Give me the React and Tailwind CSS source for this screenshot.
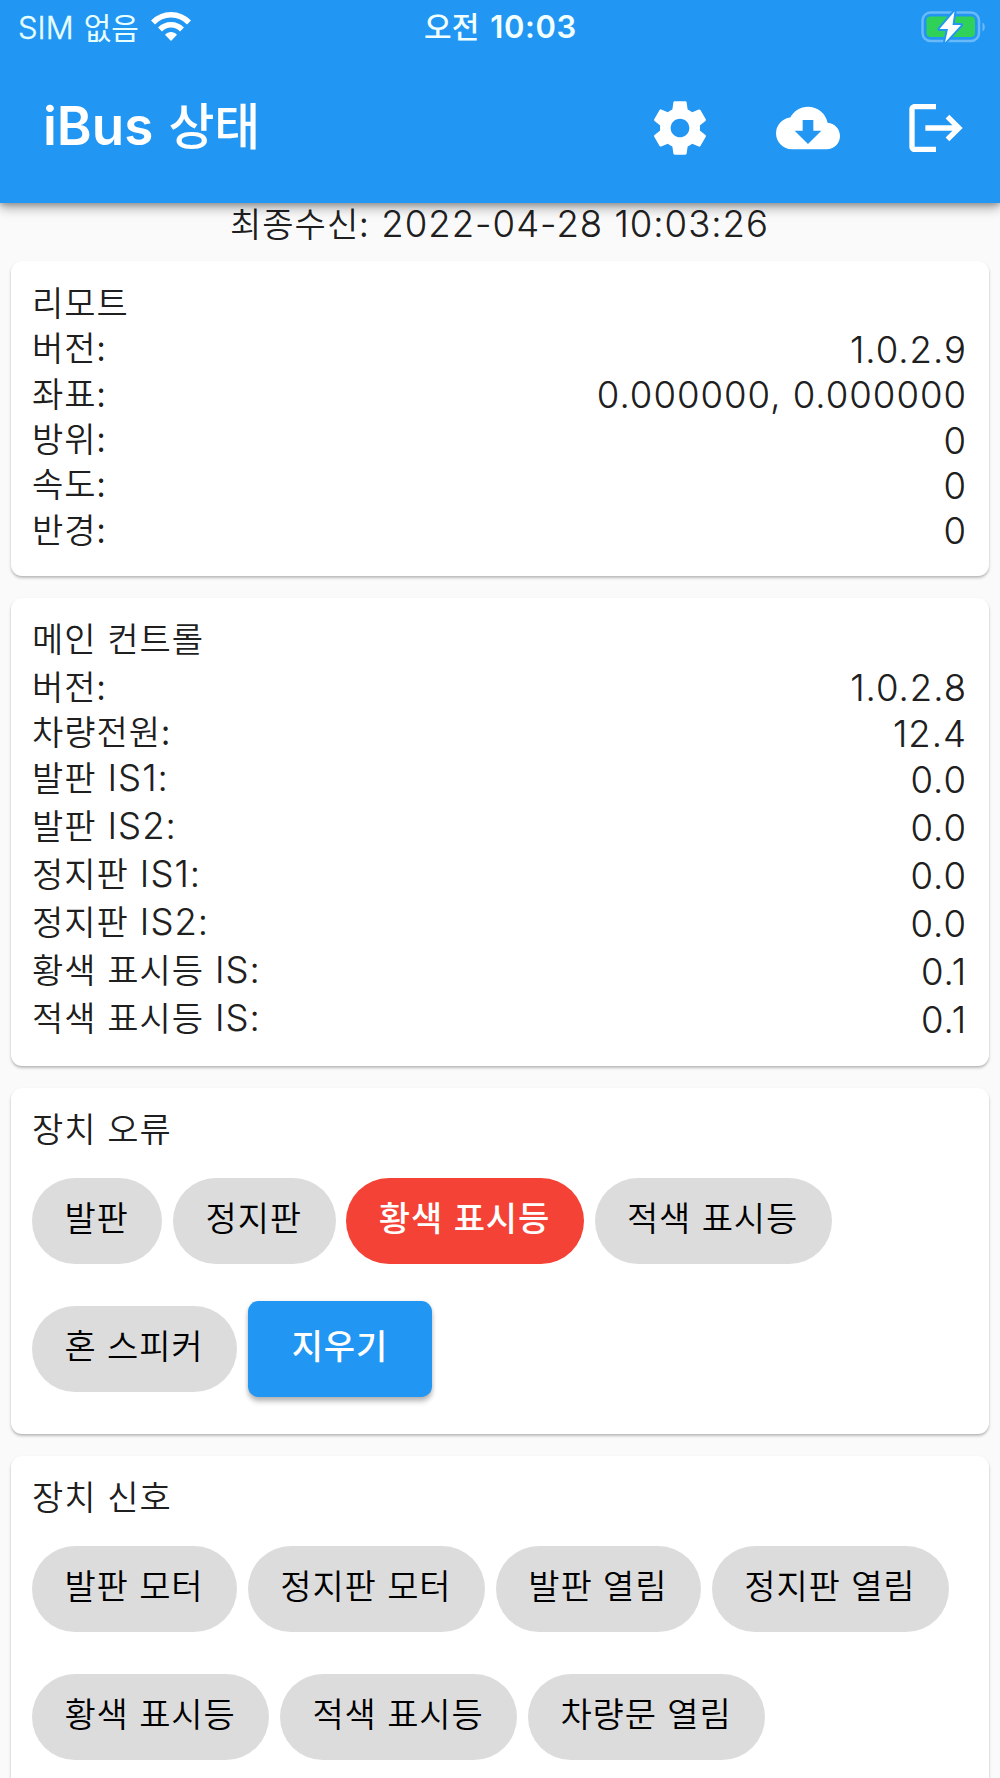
import React from "react";
import { MdCloudDownload } from "react-icons/md";

const remote = [
  { label: "버전:", value: "1.0.2.9" },
  { label: "좌표:", value: "0.000000, 0.000000" },
  { label: "방위:", value: "0" },
  { label: "속도:", value: "0" },
  { label: "반경:", value: "0" },
];

const mainControl = [
  { label: "버전:", value: "1.0.2.8" },
  { label: "차량전원:", value: "12.4" },
  { label: "발판", suffix: "IS1:", value: "0.0" },
  { label: "발판", suffix: "IS2:", value: "0.0" },
  { label: "정지판", suffix: "IS1:", value: "0.0" },
  { label: "정지판", suffix: "IS2:", value: "0.0" },
  { label: "황색 표시등", suffix: "IS:", value: "0.1" },
  { label: "적색 표시등", suffix: "IS:", value: "0.1" },
];

const errors = [
  { label: "발판" },
  { label: "정지판" },
  { label: "황색 표시등", active: true },
  { label: "적색 표시등" },
  { label: "혼 스피커" },
];

const signals = [
  { label: "발판 모터" },
  { label: "정지판 모터" },
  { label: "발판 열림" },
  { label: "정지판 열림" },
  { label: "황색 표시등" },
  { label: "적색 표시등" },
  { label: "차량문 열림" },
];

const Korean = ({ children }) => (
  <span className="font-['Noto_Sans_CJK_KR',sans-serif] text-[34px] font-[350] tracking-[1px] [word-spacing:2px]">
    {children}
  </span>
);

const Latin = ({ children }) => (
  <span className="font-['Inter',sans-serif] text-[36.5px] font-light tracking-[1px] [-webkit-text-stroke:0.2px_currentColor]">
    {children}
  </span>
);

const Card = ({ className = "", children }) => (
  <section
    className={`rounded-[11px] bg-white px-[21.33px] shadow-[0_2px_3px_rgba(0,0,0,0.24),0_1px_2px_rgba(0,0,0,0.05)] ${className}`}
  >
    {children}
  </section>
);

const Row = ({ label, suffix, value }) => (
  <div className={`flex items-center justify-between ${suffix ? "h-12" : "h-[45.33px]"}`}>
    <div
      className={`flex items-baseline gap-[11px] leading-none ${suffix ? "" : "pb-[2px]"}`}
    >
      <Korean>{label}</Korean>
      {suffix && <Latin>{suffix}</Latin>}
    </div>
    <div className="flex pt-1 pr-px leading-none">
      <Latin>{value}</Latin>
    </div>
  </div>
);

const Chip = ({ label, active }) => (
  <div className="flex h-32 items-center">
    <div
      className={`flex h-[85.33px] items-center rounded-full pr-[33.8px] pl-[32.4px] pb-[8px] leading-none font-['Noto_Sans_CJK_KR',sans-serif] text-[34px] tracking-[0.87px] [word-spacing:2px] whitespace-nowrap ${
        active ? "bg-[#f44336] font-medium text-white" : "bg-[#dcdcdc] font-[350] text-black"
      }`}
    >
      {label}
    </div>
  </div>
);

const StatusBar = () => (
  <div className="grid h-[53.33px] grid-cols-3 items-center pr-[14px] pl-[18px] leading-none">
    <div className="flex items-center gap-[12px] text-[#e6ffff]">
      <div className="flex items-baseline gap-[10px]">
        <span className="font-['Inter',sans-serif] text-[31px] font-light [-webkit-text-stroke:0.4px_currentColor]">
          SIM
        </span>
        <span className="font-['Noto_Sans_CJK_KR',sans-serif] text-[30px] font-normal">없음</span>
      </div>
      <svg className="h-[29px] w-[40px]" viewBox="0 0 40 29" fill="none" stroke="white">
        <path d="M2 10.5C12 .2 28 .2 38 10.5" strokeWidth="5.5" />
        <path d="M9 17.5C15.200 11.200 24.800 11.200 31 17.500" strokeWidth="5.5" />
        <path d="M20 29l-6-6.200c3.300-3.600 8.700-3.600 12 0z" fill="white" stroke="none" />
      </svg>
    </div>
    <div className="flex items-baseline justify-center gap-[11px] pr-[3px] pb-px text-[#f2ffff]">
      <span className="font-['Noto_Sans_CJK_KR',sans-serif] text-[30px] font-medium">오전</span>
      <span className="font-['Inter',sans-serif] text-[31px] font-semibold tracking-[0.6px]">
        10:03
      </span>
    </div>
    <svg className="h-[34px] w-[66px] justify-self-end" viewBox="0 0 66 34">
      <rect x="2.500" y="2.500" width="56.500" height="28.500" rx="8" fill="none" stroke="#6ab9f8" strokeWidth="2.500" />
      <path d="M62.500 12.500c3 1.500 3 7.500 0 9z" fill="#6ab9f8" />
      <rect x="6.500" y="6.500" width="48.500" height="20.500" rx="4" fill="#30d158" />
      <path
        d="M34.500 1.500L19.500 19h8.500L25 32.500 41 15h-8.500z"
        fill="white"
        stroke="#2196f3"
        strokeWidth="4"
        strokeLinejoin="round"
        paintOrder="stroke"
      />
    </svg>
  </div>
);

const App = () => {
  return (
    <div className="flex h-[1778px] w-[1000px] flex-col overflow-hidden bg-[#fafafa] text-black/90">
      <header className="h-[202.67px] shrink-0 bg-[#2196f3] text-white shadow-[0_5px_11px_rgba(0,0,0,0.32),0_2px_5px_rgba(0,0,0,0.2)]">
        <StatusBar />
        <div className="flex h-[149.33px] items-center justify-between pr-8 pl-[43px]">
          <h1 className="flex items-baseline gap-[15px] pb-[4px] leading-none">
            <span className="font-['Inter',sans-serif] text-[53px] font-semibold">iBus</span>
            <span className="font-['Noto_Sans_CJK_KR',sans-serif] text-[50px] font-medium">상태</span>
          </h1>
          <div className="flex items-center gap-16">
            <svg className="size-16" viewBox="0 0 24 24" fill="currentColor">
              <path d="M19.430 12.980c.040-.320.070-.640.070-.980s-.030-.660-.070-.980l2.110-1.650c.190-.150.240-.420.120-.640l-2-3.460c-.120-.220-.390-.300-.610-.220l-2.490 1c-.520-.400-1.080-.730-1.690-.980l-.380-2.650C14.460 2.180 14.250 2 14 2h-4c-.250 0-.460.180-.490.420l-.380 2.650c-.610.250-1.170.590-1.690.980l-2.490-1c-.230-.090-.490 0-.610.220l-2 3.460c-.130.220-.070.490.120.640l2.110 1.650c-.040.320-.070.650-.070.980s.030.660.070.980l-2.110 1.650c-.190.150-.240.420-.120.640l2 3.460c.120.220.390.300.610.220l2.490-1c.520.400 1.080.730 1.690.980l.380 2.650c.030.240.240.420.490.420h4c.250 0 .460-.180.490-.420l.380-2.650c.610-.250 1.170-.590 1.690-.980l2.490 1c.230.090.490 0 .610-.220l2-3.460c.120-.220.070-.490-.120-.640l-2.110-1.650zM12 15.500c-1.930 0-3.500-1.570-3.500-3.500s1.570-3.500 3.500-3.500 3.500 1.570 3.500 3.500-1.570 3.500-3.500 3.500z" />
            </svg>
            <MdCloudDownload className="size-16" />
            <svg className="size-16" viewBox="0 0 24 24" fill="currentColor">
              <path d="M17 7l-1.410 1.410L18.170 11H8v2h10.170l-2.580 2.580L17 17l5-5zM4 5h8V3H4c-1.100 0-2 .900-2 2v14c0 1.100.900 2 2 2h8v-2H4V5z" />
            </svg>
          </div>
        </div>
      </header>

      <div className="flex h-[42px] shrink-0 items-center justify-center pt-[2px] pr-px leading-none">
        <div className="flex items-baseline gap-[12px]">
          <Korean>최종수신:</Korean>
          <Latin>2022-04-28 10:03:26</Latin>
        </div>
      </div>

      <main className="mt-[16.67px] flex flex-col gap-[21.33px] px-[10.67px]">
        <Card className="h-[315px] pt-[19px]">
          <Row label="리모트" />
          {remote.map((item) => (
            <Row key={item.label} {...item} />
          ))}
        </Card>

        <Card className="h-[468.67px] pt-[19px]">
          <div className="mb-[2px]">
            <Row label="메인 컨트롤" />
          </div>
          {mainControl.map((item) => (
            <Row key={item.label + item.suffix} {...item} />
          ))}
        </Card>

        <Card className="h-[346.67px] pt-[19px]">
          <div className="mb-[5px]">
            <Row label="장치 오류" />
          </div>
          <div className="flex flex-wrap gap-x-[10.67px]">
            {errors.map((item) => (
              <Chip key={item.label} {...item} />
            ))}
            <div className="flex h-32 items-center">
              <button className="flex h-24 w-[184px] items-center justify-center rounded-[10.67px] bg-[#2196f3] pb-[7px] font-['Noto_Sans_CJK_KR',sans-serif] text-[34px] leading-none font-medium tracking-[0.82px] text-white shadow-[0_5px_5px_rgba(0,0,0,0.22),0_1px_4px_rgba(0,0,0,0.15)]">
                지우기
              </button>
            </div>
          </div>
        </Card>

        <Card className="h-[346.67px] pt-[19px]">
          <div className="mb-[5px]">
            <Row label="장치 신호" />
          </div>
          <div className="flex flex-wrap gap-x-[10.67px]">
            {signals.map((item) => (
              <Chip key={item.label} {...item} />
            ))}
          </div>
        </Card>
      </main>
    </div>
  );
};

export default App;
